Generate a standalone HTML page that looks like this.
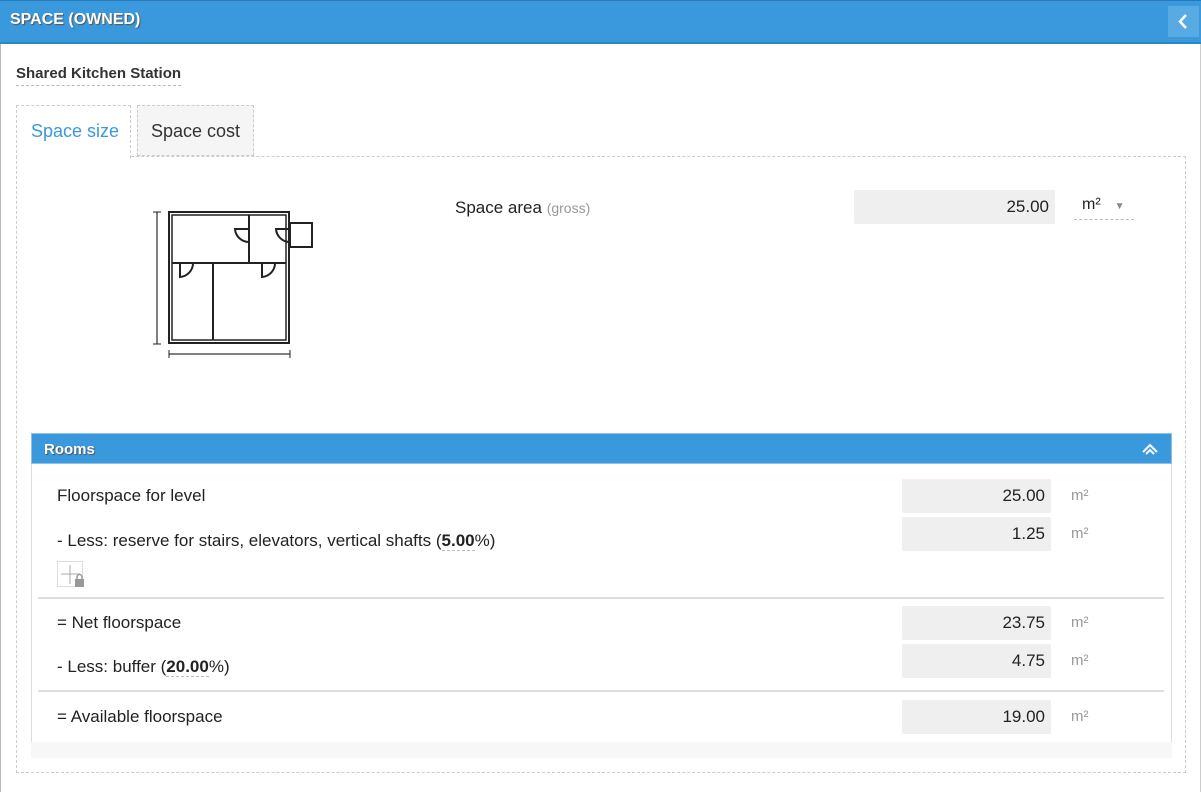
<!DOCTYPE html>
<html><head><meta charset="utf-8"><style>
*{box-sizing:border-box;margin:0;padding:0}
body{width:1201px;height:792px;background:#fff;font-family:"Liberation Sans",sans-serif;color:#222;position:relative;overflow:hidden}
.abs{position:absolute}
.hdr{left:0;top:0;width:1201px;height:44px;background:#3a99dc;border-bottom:2px solid #2f86c4;border-top:1px solid #2a78b5}
.hdr span{position:absolute;left:10px;top:10px;color:#fff;font-weight:bold;font-size:16px;text-shadow:1px 1px 1px #555}
.back{right:2px;top:5px;width:31px;height:31px;background:#58aae3}
.lbl{font-size:17px}
.inp{background:#efefef;border-radius:2px;text-align:right;font-size:17px;padding-right:6px;line-height:34px;height:34px;color:#222}
.unit{color:#999;font-size:15px}
.hr{height:2px;background:#ddd;left:38px;width:1126px}
</style></head><body>
<div class="abs" style="left:0;top:0;width:1px;height:792px;background:#bbb"></div>
<div class="abs" style="right:0;top:0;width:1px;height:792px;background:#ccc"></div>
<div class="abs hdr"><span>SPACE (OWNED)</span><div class="abs back"><svg width="31" height="31"><path d="M18 9 L12 15.5 L18 22" stroke="#fff" stroke-width="2.5" fill="none"/></svg></div></div>
<div class="abs" style="left:16px;top:65px;font-size:15px;font-weight:bold;color:#333;border-bottom:1px dashed #bbb;padding-bottom:3px">Shared Kitchen Station</div>
<div class="abs" style="left:16px;top:156px;width:1170px;height:617px;border:1px dashed #ccc"></div>
<div class="abs" style="left:16px;top:105px;width:115px;height:53px;border:1px dashed #ccc;border-bottom:none;background:#fff;color:#3a99dc;font-size:18px;padding:15px 0 0 14px">Space size</div>
<div class="abs" style="left:137px;top:105px;width:117px;height:51px;border:1px dashed #ccc;background:#f5f5f5;color:#333;font-size:18px;padding:15px 0 0 13px">Space cost</div>
<svg class="abs" style="left:0;top:0" width="400" height="400" fill="none" stroke="#222">
<line x1="157" y1="212" x2="157" y2="344" stroke="#555" stroke-width="1.5"/><line x1="153" y1="212" x2="161" y2="212"/><line x1="153" y1="344" x2="161" y2="344"/>
<line x1="169" y1="354" x2="290" y2="354" stroke="#555" stroke-width="1.5"/><line x1="169" y1="350" x2="169" y2="358"/><line x1="290" y1="350" x2="290" y2="358"/>
<rect x="169" y="212" width="120" height="131" stroke-width="2"/>
<rect x="172" y="215" width="114" height="125" stroke-width="1.5"/>
<line x1="172" y1="263" x2="286" y2="263" stroke-width="2"/>
<line x1="213" y1="263" x2="213" y2="340" stroke-width="2"/>
<line x1="249" y1="215" x2="249" y2="263" stroke-width="2"/>
<rect x="290" y="223" width="22" height="24" stroke-width="2"/>
<path d="M180 263 V277 A14 14 0 0 0 193 263" stroke-width="2"/>
<path d="M262 263 V277 A14 14 0 0 0 275 263" stroke-width="2"/>
<path d="M249 229 H235 A14 14 0 0 0 249 242" stroke-width="2"/>
<path d="M289 229 H276 A14 14 0 0 0 289 242" stroke-width="2"/>
</svg>
<div class="abs lbl" style="left:455px;top:198px">Space area <span style="color:#999;font-size:14px">(gross)</span></div>
<div class="abs inp" style="left:854px;top:190px;width:201px">25.00</div>
<div class="abs" style="left:1074px;top:190px;width:60px;height:30px;border-bottom:1px dashed #bbb;font-size:16px;padding:6px 0 0 8px">m²<span style="color:#888;font-size:10px;margin-left:14px">▼</span></div>
<div class="abs" style="left:31px;top:433px;width:1141px;height:325px;border:1px solid #ddd;background:#fff"></div>
<div class="abs" style="left:31px;top:742px;width:1141px;height:16px;background:#f7f7f7"></div>
<div class="abs" style="left:31px;top:433px;width:1141px;height:31px;background:#3a99dc;border:1px solid #8fc0e3"><span class="abs" style="left:12px;top:7px;color:#fff;font-weight:bold;font-size:15px;text-shadow:1px 1px 1px #555">Rooms</span>
<svg class="abs" style="right:12px;top:7px" width="18" height="16"><path d="M2 11 L9 4 L16 11 M5 13 L9 9 L13 13" stroke="#fff" stroke-width="2" fill="none"/></svg></div>
<div class="abs lbl" style="left:57px;top:486px">Floorspace for level</div>
<div class="abs inp" style="left:902px;top:479px;width:149px">25.00</div><div class="abs unit" style="left:1071px;top:487px">m²</div>
<div class="abs lbl" style="left:57px;top:531px">- Less: reserve for stairs, elevators, vertical shafts (<b style="border-bottom:1px dashed #bbb">5.00</b>%)</div>
<div class="abs inp" style="left:902px;top:517px;width:149px">1.25</div><div class="abs unit" style="left:1071px;top:525px">m²</div>
<div class="abs" style="left:57px;top:561px;width:26px;height:26px;border:1px solid #ddd"><svg width="26" height="26"><path d="M12 3V22M3 12H22" stroke="#aaa"/><rect x="17" y="17" width="9" height="8" fill="#999"/><path d="M19 18 V15 A2.5 2.5 0 0 1 24 15 V18" stroke="#999" stroke-width="1.5" fill="none"/></svg></div>
<div class="abs hr" style="top:597px"></div>
<div class="abs lbl" style="left:57px;top:613px">= Net floorspace</div>
<div class="abs inp" style="left:902px;top:606px;width:149px">23.75</div><div class="abs unit" style="left:1071px;top:614px">m²</div>
<div class="abs lbl" style="left:57px;top:657px">- Less: buffer (<b style="border-bottom:1px dashed #bbb">20.00</b>%)</div>
<div class="abs inp" style="left:902px;top:644px;width:149px">4.75</div><div class="abs unit" style="left:1071px;top:652px">m²</div>
<div class="abs hr" style="top:690px"></div>
<div class="abs lbl" style="left:57px;top:707px">= Available floorspace</div>
<div class="abs inp" style="left:902px;top:700px;width:149px">19.00</div><div class="abs unit" style="left:1071px;top:708px">m²</div>
</body></html>
